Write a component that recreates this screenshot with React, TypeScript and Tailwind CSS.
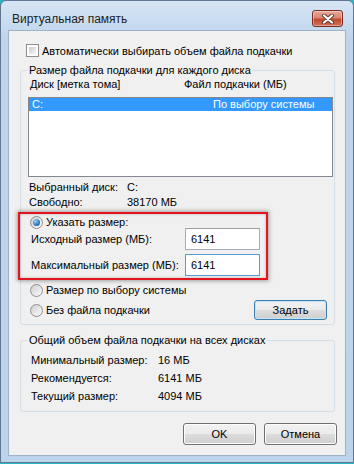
import { ReactNode } from 'react';

function Checkbox() {
  return (
    <span className="w-[13px] h-[13px] shrink-0 border border-[#8f8f8f] bg-white p-[2px]">
      <span className="block w-full h-full bg-gradient-to-br from-[#cbcbcb] to-[#f6f6f6]" />
    </span>
  );
}

function Radio({ checked = false }: { checked?: boolean }) {
  return (
    <span className="w-[13px] h-[13px] shrink-0 rounded-full border border-[#8f8f8f] bg-gradient-to-br from-[#cfcfcf] to-[#fbfbfb] flex items-center justify-center">
      {checked && (
        <span className="w-[7px] h-[7px] rounded-full bg-[radial-gradient(circle_at_35%_30%,#9fd3f7,#2a78c8_60%,#1a4f8c)]" />
      )}
    </span>
  );
}

function WinButton({ children }: { children: ReactNode }) {
  return (
    <div className="h-[22px] w-[73px] rounded-[3px] border border-[#707070] shadow-[inset_0_0_0_1px_#fcfcfc] bg-[linear-gradient(#f2f2f2_0%,#ebebeb_50%,#dddddd_50%,#cfcfcf_100%)] flex items-center justify-center">
      {children}
    </div>
  );
}

function Group({ title, children, className = '' }: { title: string; children: ReactNode; className?: string }) {
  return (
    <fieldset className={`ml-[11px] mr-[10px] border border-[#d5dfe5] rounded-[3px] ${className}`}>
      <legend className="ml-[6px] px-[2px] leading-[14px] whitespace-nowrap">{title}</legend>
      {children}
    </fieldset>
  );
}

export default function App() {
  return (
    <div className="w-[354px] h-[464px] flex flex-col bg-[#2cb5c4] font-['Liberation_Sans',Arial,sans-serif] text-[11px] text-black whitespace-nowrap">
      <div className="h-[463px] flex flex-col rounded-t-[6px] border border-[#60778f] bg-[linear-gradient(#d6e5f5,#bed4ec_40px,#bcd3ec)]">
        {/* title bar */}
        <div className="h-[29px] flex items-start pl-[11px] pr-[10px]">
          <span className="mt-[11px] leading-[14px] text-[12px] text-[#1e1e1e]">Виртуальная память</span>
          <div className="ml-auto mt-[9px] w-[31px] h-[17px] rounded-[3px] border border-[#7b2d20] bg-[linear-gradient(#e9a99b_0%,#d98670_45%,#c2482e_55%,#d0705a_100%)] shadow-[inset_0_0_0_1px_rgba(255,255,255,0.35)] flex items-center justify-center">
            <svg width="14" height="10" viewBox="0 0 14 10">
              <path d="M3 1.5 L11 8.5 M11 1.5 L3 8.5" stroke="#5a3a34" strokeWidth="4" strokeLinecap="round" />
              <path d="M3 1.5 L11 8.5 M11 1.5 L3 8.5" stroke="#ffffff" strokeWidth="2.2" strokeLinecap="round" />
            </svg>
          </div>
        </div>

        {/* client area */}
        <div className="mx-[7px] h-[426px] border border-[#9fb3c8] bg-[#f0f0f0] flex flex-col">
          <div className="mt-[13px] ml-[17px] flex items-center gap-[3px] h-[13px]">
            <Checkbox />
            <span className="leading-[14px]">Автоматически выбирать объем файла подкачки</span>
          </div>

          <Group title="Размер файла подкачки для каждого диска" className="mt-[6px] pb-[4px]">
            <div className="flex pl-[9px] leading-[14px]">
              <span className="w-[154px] shrink-0">Диск [метка тома]</span>
              <span>Файл подкачки (МБ)</span>
            </div>
            <div className="mt-[6px] ml-[7px] mr-[1px] h-[80px] border border-[#828790] bg-white">
              <div className="h-[13px] bg-[#3399ff] text-white flex items-center pl-[3px] leading-[13px]">
                <span className="w-[181px] shrink-0">C:</span>
                <span>По выбору системы</span>
              </div>
            </div>
            <div className="mt-[3px] pl-[8px] leading-[15px]">
              <div className="flex">
                <span className="w-[98px] shrink-0">Выбранный диск:</span>
                <span>C:</span>
              </div>
              <div className="flex">
                <span className="w-[98px] shrink-0">Свободно:</span>
                <span>38170 МБ</span>
              </div>
            </div>

            <div className="relative mt-[6px]">
              <div className="absolute -left-[3px] -top-[4px] w-[250px] h-[68px] border-[2px] border-[#e3141b] shadow-[0_0_4px_1px_rgba(0,0,0,0.35),inset_0_0_3px_rgba(0,0,0,0.25)]" />
              <div className="h-[12px] pl-[9px] flex items-center gap-[3px]">
                <Radio checked />
                <span className="leading-[14px]">Указать размер:</span>
              </div>
              <div className="pl-[10px] flex items-center h-[22px]">
                <span className="w-[154px] shrink-0">Исходный размер (МБ):</span>
                <div className="w-[75px] h-[22px] border border-[#abadb3] border-t-[#9a9da4] bg-white pl-[5px] flex items-center">6141</div>
              </div>
              <div className="mt-[4px] pl-[10px] flex items-center h-[22px]">
                <span className="w-[154px] shrink-0">Максимальный размер (МБ):</span>
                <div className="w-[75px] h-[22px] border border-[#5a9bd5] bg-white pl-[5px] flex items-center">6141</div>
              </div>
            </div>

            <div className="mt-[4px] flex justify-between pr-[7px]">
              <div className="pl-[9px]">
                <div className="h-[20px] flex items-center gap-[3px]">
                  <Radio />
                  <span className="leading-[14px]">Размер по выбору системы</span>
                </div>
                <div className="h-[20px] flex items-center gap-[3px]">
                  <Radio />
                  <span className="leading-[14px]">Без файла подкачки</span>
                </div>
              </div>
              <div className="mt-[20px]">
                <div className="h-[20px] w-[73px] rounded-[3px] border border-[#3c7fb1] shadow-[inset_0_0_0_1px_#c4e5f6] bg-[linear-gradient(#f2f2f2_0%,#ebebeb_50%,#dddddd_50%,#cfcfcf_100%)] flex items-center justify-center">
                  Задать
                </div>
              </div>
            </div>
          </Group>

          <Group title="Общий объем файла подкачки на всех дисках" className="mt-[8px] pb-[6px]">
            <div className="mt-[4px] pl-[10px]">
              <div className="h-[18px] flex items-center">
                <span className="w-[127px] shrink-0">Минимальный размер:</span>
                <span>16 МБ</span>
              </div>
              <div className="h-[18px] flex items-center">
                <span className="w-[127px] shrink-0">Рекомендуется:</span>
                <span>6141 МБ</span>
              </div>
              <div className="h-[18px] flex items-center">
                <span className="w-[127px] shrink-0">Текущий размер:</span>
                <span>4094 МБ</span>
              </div>
            </div>
          </Group>

          <div className="mt-[11px] mr-[8px] flex justify-end gap-[8px]">
            <WinButton>OK</WinButton>
            <WinButton>Отмена</WinButton>
          </div>
        </div>
      </div>
    </div>
  );
}
